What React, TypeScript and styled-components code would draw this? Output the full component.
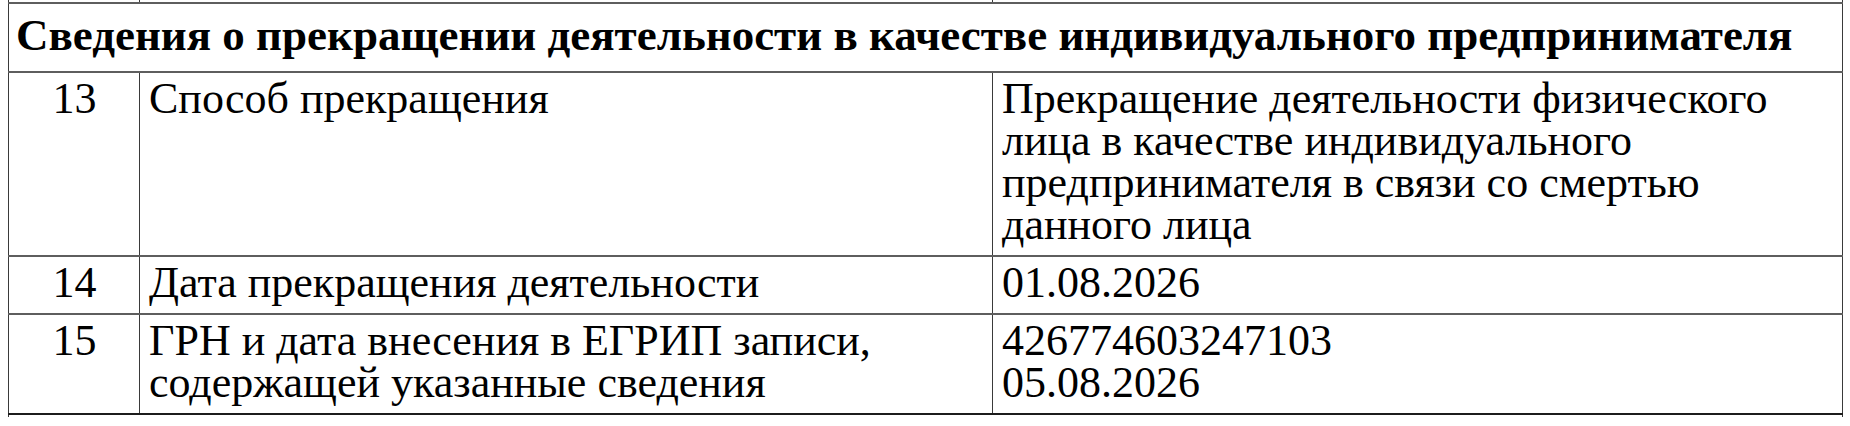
import styled, { createGlobalStyle } from "styled-components";

const serif = `"Liberation Serif", "Times New Roman", serif`;

const GlobalStyle = createGlobalStyle`
  html, body {
    margin: 0;
    padding: 0;
    background: #fff;
  }
  body {
    font-family: ${serif};
    color: #000;
  }
`;

const lineColor = "#3a3a3a";
const rowLineColor = "#5e5e5e";
const lastLineColor = "#1c1c1c";

interface IRow {
    num: string;
    label: string[];
    value: string[];
}

// lines are split the same way as on the printed extract
const rows: IRow[] = [
    {
        num: "13",
        label: ["Способ прекращения"],
        value: [
            "Прекращение деятельности физического",
            "лица в качестве индивидуального",
            "предпринимателя в связи со смертью",
            "данного лица",
        ],
    },
    {
        num: "14",
        label: ["Дата прекращения деятельности"],
        value: ["01.08.2026"],
    },
    {
        num: "15",
        label: ["ГРН и дата внесения в ЕГРИП записи,", "содержащей указанные сведения"],
        value: ["426774603247103", "05.08.2026"],
    },
];

const App = () => {
    return (
        <Page>
            <GlobalStyle />
            <Table>
                <colgroup>
                    <NumCol />
                    <LabelCol />
                    <col />
                </colgroup>
                <tbody>
                    <tr>
                        <StubCell $edge="top" />
                        <StubCell $edge="top" />
                        <StubCell $edge="top" />
                    </tr>
                    <tr>
                        <HeadCell colSpan={3}>
                            Сведения о прекращении деятельности в качестве индивидуального предпринимателя
                        </HeadCell>
                    </tr>
                    {rows.map((row, i) => {
                        const last = i === rows.length - 1;
                        return (
                            <tr key={row.num}>
                                <Cell $center $last={last}>
                                    {row.num}
                                </Cell>
                                <Cell $last={last}>
                                    {row.label.map((l) => (
                                        <Line key={l}>{l}</Line>
                                    ))}
                                </Cell>
                                <Cell $last={last}>
                                    {row.value.map((v) => (
                                        <Line key={v}>{v}</Line>
                                    ))}
                                </Cell>
                            </tr>
                        );
                    })}
                    <tr>
                        <StubCell $edge="bottom" colSpan={3} />
                    </tr>
                </tbody>
            </Table>
        </Page>
    );
};

const Page = styled.div`
  padding: 0 7px 0 8px;
  font-family: ${serif};
`;

const Table = styled.table`
  width: 100%;
  border-collapse: collapse;
  table-layout: fixed;
  font-family: ${serif};
  font-size: 44px;
  line-height: 42px;
  color: #000;
`;

const NumCol = styled.col`
  width: 131px;
`;

const LabelCol = styled.col`
  width: 853px;
`;

const Cell = styled.td<{ $center?: boolean; $last?: boolean }>`
  font-family: ${serif};
  font-size: 44px;
  line-height: 42px;
  border-left: 1px solid ${lineColor};
  border-right: 1px solid ${lineColor};
  border-top: 2px solid ${rowLineColor};
  border-bottom: 2px solid ${({ $last }) => ($last ? lastLineColor : rowLineColor)};
  padding: 5px 8px 9px 9px;
  vertical-align: top;
  white-space: nowrap;
  text-align: ${({ $center }) => ($center ? "center" : "left")};
`;

const HeadCell = styled(Cell)`
  font-size: 45px;
  line-height: 48px;
  font-weight: bold;
  text-align: left;
  padding: 7px 8px 12px 7px;
`;

const StubCell = styled.td<{ $edge: "top" | "bottom" }>`
  height: 2px;
  padding: 0;
  border-left: 1px solid ${lineColor};
  border-right: 1px solid ${lineColor};
  ${({ $edge }) =>
    $edge === "top"
      ? `border-top: none; border-bottom: 2px solid ${rowLineColor};`
      : `border-bottom: none; border-top: 2px solid ${lastLineColor};`}
`;

const Line = styled.div``;

export default App;
